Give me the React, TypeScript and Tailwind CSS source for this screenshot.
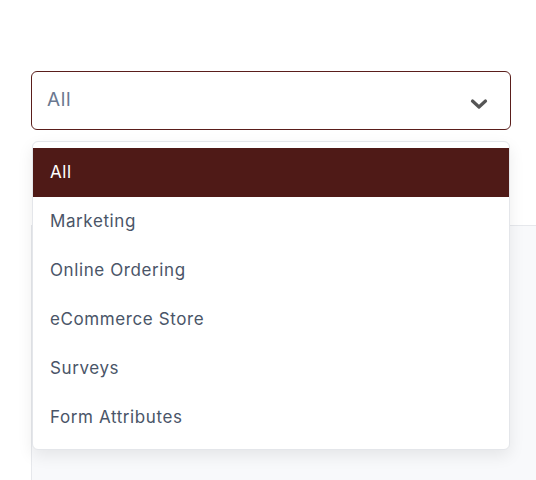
import { useState } from 'react'

const OPTIONS = ['All', 'Marketing', 'Online Ordering', 'eCommerce Store', 'Surveys', 'Form Attributes']

export default function App() {
  const [selected, setSelected] = useState('All')

  return (
    <div className="relative min-h-[480px] bg-white pl-[31px] pt-[71px] font-['Inter',sans-serif]">
      <div className="relative w-[480px]">
        {/* ── Select trigger ── */}
        <button
          type="button"
          className="flex h-[59px] w-full items-center justify-between rounded-[6px] border-[1.5px] border-[#5a1e1b] bg-white pl-[15px] pr-[22px] text-left"
        >
          <span className="text-[19px] tracking-[0.6px] text-[#6b7890]">{selected}</span>
          <svg width="18" height="12" viewBox="0 0 18 12" fill="none" className="mt-[6px]">
            <path d="M2.5 3 L9 9 L15.5 3" stroke="#555" strokeWidth="3.2" strokeLinecap="round" strokeLinejoin="round" />
          </svg>
        </button>

        {/* ── Options menu ── */}
        <ul className="absolute left-[1px] top-[70px] z-10 w-[478px] rounded-[6px] border border-[#e4e6ea] bg-white pb-[7px] pt-[6px] shadow-[0_6px_16px_rgba(0,0,0,0.08)]">
          {OPTIONS.map((opt) => {
            const active = opt === selected
            return (
              <li
                key={opt}
                onClick={() => setSelected(opt)}
                className={[
                  'flex h-[49px] cursor-pointer items-center pl-[17px] text-[17px] tracking-[0.6px]',
                  active ? 'bg-[#4f1a17] text-white' : 'text-[#4a5568]',
                ].join(' ')}
              >
                {opt}
              </li>
            )
          })}
        </ul>
      </div>

      {/* ── Panel behind the menu ── */}
      <div className="mt-[95px] h-[255px] border-l border-t border-[#e6e8ec] bg-[#f8f9fb]" />
    </div>
  )
}
